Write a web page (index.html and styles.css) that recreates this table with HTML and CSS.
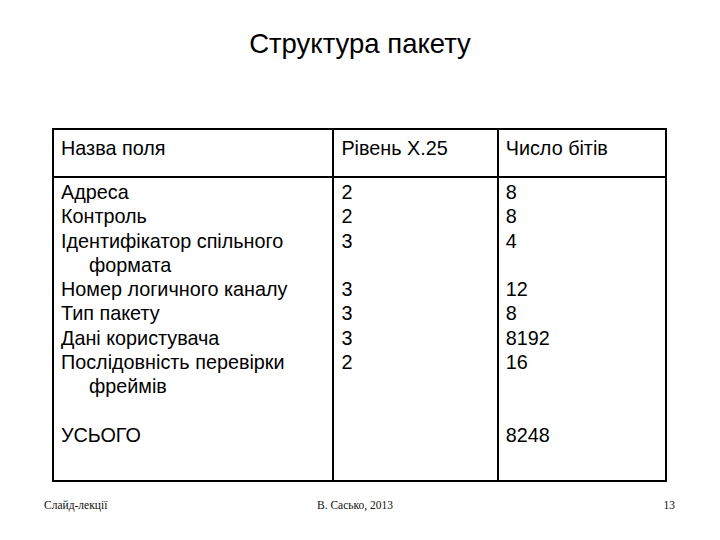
FILE: index.html
```html
<!DOCTYPE html>
<html lang="uk">
<head>
<meta charset="utf-8">
<title>Структура пакету</title>
<link rel="stylesheet" href="styles.css">
</head>
<body>
<div class="slide">
  <h1 class="title">Структура пакету</h1>
  <table class="packet">
    <colgroup>
      <col class="c1"><col class="c2"><col class="c3">
    </colgroup>
    <tr class="head">
      <td>Назва поля</td>
      <td>Рівень X.25</td>
      <td>Число бітів</td>
    </tr>
    <tr class="body">
      <td>
        <div class="ln">Адреса</div>
        <div class="ln">Контроль</div>
        <div class="ln hang">Ідентифікатор спільного формата</div>
        <div class="ln">Номер логичного каналу</div>
        <div class="ln">Тип пакету</div>
        <div class="ln">Дані користувача</div>
        <div class="ln hang">Послідовність перевірки фреймів</div>
        <div class="ln">&nbsp;</div>
        <div class="ln">УСЬОГО</div>
      </td>
      <td>
        <div class="ln">2</div>
        <div class="ln">2</div>
        <div class="ln">3</div>
        <div class="ln">&nbsp;</div>
        <div class="ln">3</div>
        <div class="ln">3</div>
        <div class="ln">3</div>
        <div class="ln">2</div>
      </td>
      <td>
        <div class="ln">8</div>
        <div class="ln">8</div>
        <div class="ln">4</div>
        <div class="ln">&nbsp;</div>
        <div class="ln">12</div>
        <div class="ln">8</div>
        <div class="ln">8192</div>
        <div class="ln">16</div>
        <div class="ln">&nbsp;</div>
        <div class="ln">&nbsp;</div>
        <div class="ln">8248</div>
      </td>
    </tr>
  </table>
  <div class="footer">
    <span class="f-left">Слайд-лекції</span>
    <span class="f-mid">В. Сасько, 2013</span>
    <span class="f-right">13</span>
  </div>
</div>
</body>
</html>
```
FILE: styles.css
```css
html, body {
  margin: 0;
  padding: 0;
  background: #fff;
}
.slide {
  width: 720px;
  height: 540px;
  display: flex;
  flex-direction: column;
  font-family: "Liberation Sans", Arial, sans-serif;
  color: #000;
}
.title {
  margin: 28px 0 0 0;
  font-weight: normal;
  font-size: 27.5px;
  line-height: 32px;
  text-align: center;
}
.packet {
  margin: 68px 0 0 52px;
  width: 615px;
  border-collapse: collapse;
  font-size: 19.8px;
  line-height: 24.3px;
}
.c1 { width: 281px; }
.c2 { width: 165px; }
.c3 { width: 169px; }
.packet td {
  border: 2px solid #000;
  vertical-align: top;
  padding: 0 6px 0 7px;
  white-space: nowrap;
}
.packet td .hang {
  white-space: normal;
}
.head td {
  height: 48px;
  box-sizing: border-box;
  padding-top: 6px;
}
.body td {
  height: 304px;
  box-sizing: border-box;
  padding-top: 2px;
}
.hang {
  padding-left: 28px;
  text-indent: -28px;
}
.footer {
  margin: 16px 45px 0 44px;
  display: grid;
  grid-template-columns: 1fr auto 1fr;
  font-family: "Liberation Serif", "Times New Roman", serif;
  font-size: 11.5px;
  line-height: 14px;
  color: #111;
}
.f-mid { padding-right: 9px; }
.f-right { text-align: right; }
```
